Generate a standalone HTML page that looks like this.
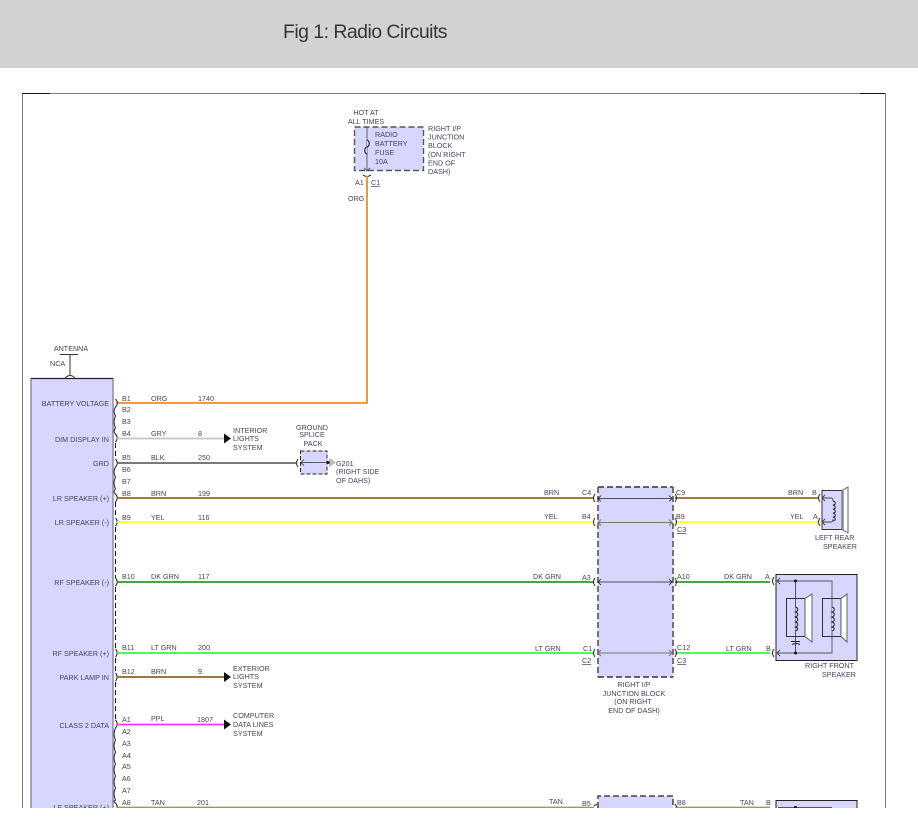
<!DOCTYPE html>
<html><head><meta charset="utf-8"><style>
html,body{margin:0;padding:0;background:#fff;width:918px;height:822px;overflow:hidden}
#h{position:absolute;left:0;top:0;width:918px;height:68px;background:#d2d2d2}
#t{position:absolute;left:283px;top:20px;font:19.5px/24px "Liberation Sans",sans-serif;color:#363636;letter-spacing:-.55px;white-space:nowrap}
svg{position:absolute;left:0;top:0}
text{font-family:"Liberation Sans",sans-serif;font-size:7.2px;fill:#45455c}
.e{text-anchor:end}.m{text-anchor:middle}
.u{text-decoration:underline}
.d{fill:none;stroke:#333;stroke-width:1.4;stroke-dasharray:6 3}
.b{fill:#d6d6ff}
.a{fill:none;stroke:#444;stroke-width:.9}
.c{fill:none;stroke:#222;stroke-width:1}
.w{stroke-width:1.8;fill:none}
</style></head><body>
<div id="h"></div><div id="t">Fig 1: Radio Circuits</div>
<svg width="918" height="822" viewBox="0 0 918 822">
<defs><clipPath id="k"><rect x="0" y="68" width="918" height="740"/></clipPath></defs>
<g clip-path="url(#k)">
<path d="M22.5 808V93.5H885.5V808" fill="none" stroke="#808080"/>
<path d="M22 93.5H50M860 93.5H885" stroke="#111" fill="none"/>

<!-- fuse -->
<rect class="b" x="354.500" y="127" width="69" height="43.500"/>
<rect class="d" x="354.500" y="127" width="69" height="43.500" style="stroke:#555"/>
<path d="M367 127V171M364 168l3 3 3-3" fill="none" stroke="#555" stroke-width=".9"/>
<path d="M367 140c3 1 3 6 0 7c-3 1-3 6 0 7" fill="#d6d6ff" stroke="#222" stroke-width="1.100"/>
<path d="M363 175q4 3 8 0" class="c"/>
<path d="M367 176V403H117" class="w" stroke="#f08a2c"/>
<text class="m" x="366" y="115">HOT AT</text><text class="m" x="366" y="124">ALL TIMES</text>
<text x="375" y="137">RADIO</text><text x="375" y="146">BATTERY</text><text x="375" y="155">FUSE</text><text x="375" y="164">10A</text>
<text x="428" y="131">RIGHT I/P</text><text x="428" y="139.500">JUNCTION</text><text x="428" y="148">BLOCK</text><text x="428" y="157">(ON RIGHT</text><text x="428" y="165.500">END OF</text><text x="428" y="174">DASH)</text>
<text x="355" y="185">A1</text><text class="u" x="371" y="185">C1</text><text x="348" y="201">ORG</text>

<!-- antenna -->
<text class="m" x="71" y="351">ANTENNA</text><text x="50" y="366">NCA</text>
<path d="M60 354.500H78M70 354V375M65 378q5-5 10 0" fill="none" stroke="#333" stroke-width="1"/>

<!-- module -->
<rect class="b" x="31" y="378.500" width="82" height="440"/>
<path d="M31 818V378.500H113V818" fill="none" stroke="#8c8ca8" stroke-width="1.500"/>
<path d="M31 378.500H113" stroke="#222" stroke-width="1"/>
<path d="M115.500 443V459M115.500 502V518M115.500 527V578M115.500 587V649M115.500 658V673M115.500 682V720" fill="none" stroke="#111" stroke-dasharray="5 3" stroke-width="1"/>
<g>
<text class="e" x="109" y="406">BATTERY VOLTAGE</text><text class="e" x="109" y="442">DIM DISPLAY IN</text><text class="e" x="109" y="466">GRD</text><text class="e" x="109" y="501">LR SPEAKER (+)</text><text class="e" x="109" y="525">LR SPEAKER (-)</text><text class="e" x="109" y="585">RF SPEAKER (-)</text><text class="e" x="109" y="656">RF SPEAKER (+)</text><text class="e" x="109" y="680">PARK LAMP IN</text><text class="e" x="109" y="728">CLASS 2 DATA</text><text class="e" x="109" y="810">LF SPEAKER (+)</text>
</g>
<!-- squiggles -->
<path class="c" d="M115.500 399q3.500 4 0 8q-3 4.500 0 9q-3 6 0 12q-3 3 0 6q3.500 4 0 8M115.500 459q3.500 4 0 8q-3 5 0 10q-3 6 0 12q-3 2.500 0 5q3.500 4 0 8M115.500 518q3.500 4 0 8M115.500 578q3.500 4 0 8M115.500 649q3.500 4 0 8M115.500 673q3.500 4 0 8M115.500 720q3.500 4 0 8q-3 6 0 12q-3 6 0 12q-3 6 0 12q-3 6 0 12q-3 6 0 12q-3 6 0 12q-3 1.500 0 3q3.500 4 0 8"/>

<!-- pin labels -->
<g>
<text x="122" y="401">B1</text><text x="122" y="412">B2</text><text x="122" y="424">B3</text><text x="122" y="436">B4</text><text x="122" y="460">B5</text><text x="122" y="472">B6</text><text x="122" y="484">B7</text><text x="122" y="496">B8</text><text x="122" y="520">B9</text><text x="122" y="579">B10</text><text x="122" y="650">B11</text><text x="122" y="674">B12</text><text x="122" y="722">A1</text><text x="122" y="734">A2</text><text x="122" y="746">A3</text><text x="122" y="758">A4</text><text x="122" y="769">A5</text><text x="122" y="781">A6</text><text x="122" y="793">A7</text><text x="122" y="805">A8</text>
<text x="151" y="401">ORG</text><text x="151" y="436">GRY</text><text x="151" y="460">BLK</text><text x="151" y="496">BRN</text><text x="151" y="520">YEL</text><text x="151" y="579">DK GRN</text><text x="151" y="650">LT GRN</text><text x="151" y="674">BRN</text><text x="151" y="721">PPL</text><text x="151" y="805">TAN</text>
<text x="198" y="401">1740</text><text x="198" y="436">8</text><text x="198" y="460">250</text><text x="198" y="496">199</text><text x="198" y="520">116</text><text x="198" y="579">117</text><text x="198" y="650">200</text><text x="198" y="674">9</text><text x="197" y="722">1807</text><text x="197" y="805">201</text>
</g>

<!-- wires -->
<path class="w" d="M117 438.500H225" stroke="#c4c4c4"/>
<path class="w" d="M117 463H296" stroke="#666"/>
<path class="w" d="M117 498H594M675 498H818" stroke="#9c6a10"/>
<path class="w" d="M117 522H594M675 522H818" stroke="#ffff20"/>
<path class="w" d="M117 582H594M675 582H770" stroke="#2a9a2a"/>
<path class="w" d="M117 653H594M675 653H770" stroke="#33ff33"/>
<path class="w" d="M117 677H225" stroke="#8a6a1c"/>
<path class="w" d="M117 724.500H225" stroke="#ff33ff"/>
<path class="w" d="M117 807.500H594M675 807.500H770" stroke="#b0904c"/>
<path d="M224 433.500l7 5-7 5zM224 672l7 5-7 5zM224 719.500l7 5-7 5z" fill="#111"/>

<text x="233" y="433">INTERIOR</text><text x="233" y="441">LIGHTS</text><text x="233" y="450">SYSTEM</text>
<text x="233" y="671">EXTERIOR</text><text x="233" y="679">LIGHTS</text><text x="233" y="688">SYSTEM</text>
<text x="233" y="718">COMPUTER</text><text x="233" y="727">DATA LINES</text><text x="233" y="736">SYSTEM</text>

<!-- ground splice -->
<text class="m" x="312" y="430">GROUND</text><text class="m" x="312" y="437">SPLICE</text><text class="m" x="313" y="446">PACK</text>
<rect class="b" x="300.500" y="451" width="26.500" height="23"/>
<rect x="300.500" y="451" width="26.500" height="23" fill="none" stroke="#222" stroke-width="1" stroke-dasharray="4 2"/>
<path d="M298 459q-3 4 0 8" class="c"/>
<path d="M304 459.500l-3 3 3 3M301 462.500H328" fill="none" stroke="#333" stroke-width=".8"/>
<circle cx="328" cy="462.500" r="1.500" fill="#111"/>
<path d="M330 458.500v8M332 459.500v6M334 461v3" stroke="#555" fill="none" stroke-width=".8"/>
<text x="336" y="466">G201</text><text x="336" y="474">(RIGHT SIDE</text><text x="336" y="483">OF DAHS)</text>

<!-- junction block -->
<rect class="b" x="598" y="487" width="75" height="190"/>
<path d="M598 487H673M598 677H673" fill="none" stroke="#333" stroke-width="1.400" stroke-dasharray="6 3"/>
<path d="M598 487V677M673 487V677" fill="none" stroke="#555" stroke-width="1.600" stroke-dasharray="6 3"/>
<path d="M598 498.500H672M601 495.500l-3 3 3 3M669 495.500l3 3-3 3M598 582H672M601 579l-3 3 3 3M669 579l3 3-3 3" fill="none" stroke="#222" stroke-width=".8"/>
<path d="M598 522.500H672M601 519.500l-3 3 3 3M669 519.500l3 3-3 3M598 653H672M601 650l-3 3 3 3M669 650l3 3-3 3" fill="none" stroke="#777" stroke-width="1"/>
<path d="M595 494q-3 4 0 8M595 518q-3 4 0 8M595 578q-3 4 0 8M595 649q-3 4 0 8M675 494q3 4 0 8M675 518q3 4 0 8M675 578q3 4 0 8M675 649q3 4 0 8" class="c"/>
<text x="544" y="495">BRN</text><text x="544" y="519">YEL</text><text x="533" y="579">DK GRN</text><text x="535" y="651">LT GRN</text><text x="549" y="804">TAN</text>
<text x="582" y="495">C4</text><text x="582" y="519">B4</text><text x="582" y="580">A3</text><text x="583" y="651">C1</text><text class="u" x="582" y="663">C2</text><text x="582" y="806">B5</text>
<text x="676" y="495">C9</text><text x="676" y="519">B9</text><text class="u" x="677" y="532">C3</text><text x="677" y="579">A10</text><text x="677" y="650">C12</text><text class="u" x="677" y="663">C3</text><text x="677" y="805">B8</text>
<text class="m" x="634" y="687">RIGHT I/P</text><text class="m" x="634" y="696">JUNCTION BLOCK</text><text class="m" x="633" y="704">(ON RIGHT</text><text class="m" x="634" y="713">END OF DASH)</text>
<rect class="b" x="598" y="796" width="75" height="20"/>
<path d="M598 808V796H673V808" fill="none" stroke="#444" stroke-width="1.500" stroke-dasharray="6 3"/>
<path d="M594 806l3-2M675 804l2 3" class="c"/>

<text x="724" y="579">DK GRN</text><text x="726" y="651">LT GRN</text><text x="740" y="805">TAN</text>
<text x="788" y="495">BRN</text><text x="790" y="519">YEL</text>

<!-- left rear speaker -->
<rect class="b" x="822" y="490.500" width="20" height="39"/>
<rect x="822" y="490.500" width="20" height="39" fill="none" stroke="#222" stroke-width=".9"/>
<path d="M842 490.500L848 487V533L842 529.500Z" fill="#fff" stroke="#666" stroke-width="1"/>
<path d="M843 490V530" stroke="#888" stroke-width="1.500"/>
<path d="M822 498H831c2 0 2 3 2 3M822 522H831c2 0 2-3 2-3" class="a"/>
<path d="M833 501c3 1 3 4 0 4c3 1 3 4 0 4c3 1 3 4 0 4c3 1 3 4 0 4c3 1 3 3 0 4" fill="none" stroke="#222"/>
<path d="M825 495l-3 3 3 3M825 519l-3 3 3 3" class="a"/>
<path d="M820 494q-3 4 0 8M820 518q-3 4 0 8" class="c"/>
<text x="812" y="495">B</text><text x="813" y="519">A</text>
<text x="815" y="540">LEFT REAR</text><text x="823" y="549">SPEAKER</text>

<!-- right front speaker -->
<rect class="b" x="776" y="574.500" width="81" height="86"/>
<rect x="776" y="574.500" width="81" height="86" fill="none" stroke="#222" stroke-width="1"/>
<path d="M778 581H832V653H778" fill="none" stroke="#555" stroke-width=".9"/>
<path d="M795.500 581V653" fill="none" stroke="#333" stroke-width=".8"/>
<rect x="786.500" y="598.500" width="18.500" height="38" fill="none" stroke="#222" stroke-width=".9"/>
<path d="M805 598.500L812 594V642L805 636.500Z" fill="#fff" stroke="#555" stroke-width=".9"/>
<rect x="822.500" y="598.500" width="18.500" height="38" fill="none" stroke="#222" stroke-width=".9"/>
<path d="M841 598.500L847 594V642L841 636.500Z" fill="#fff" stroke="#555" stroke-width=".9"/>
<path d="M795.500 607c3 1 3 4 0 5c3 1 3 4 0 5c3 1 3 4 0 5c3 1 3 4 0 5c3 1 3 3 0 4" fill="#d6d6ff" stroke="#222"/>
<path d="M832 607c3 1 3 4 0 5c3 1 3 4 0 5c3 1 3 4 0 5c3 1 3 4 0 5c3 1 3 3 0 4" fill="#d6d6ff" stroke="#222"/>
<path d="M791 641.500H800M792 644.500q4-2 8 0" fill="none" stroke="#222"/>
<circle cx="795.500" cy="581" r="1.500" fill="#111"/><circle cx="795.500" cy="653" r="1.500" fill="#111"/>
<path d="M780 578l-3 3 3 3M780 650l-3 3 3 3" class="a"/>
<path d="M774 577q-3 4 0 8M774 649q-3 4 0 8" class="c"/>
<text x="765" y="579">A</text><text x="766" y="651">B</text>
<text x="805" y="668">RIGHT FRONT</text><text x="822" y="677">SPEAKER</text>

<rect class="b" x="776" y="800.500" width="81" height="20"/>
<rect x="776" y="800.500" width="81" height="20" fill="none" stroke="#222"/>
<path d="M778 807.500H832" stroke="#555"/><circle cx="795.500" cy="807.500" r="1.500" fill="#111"/>
<text x="766" y="805">B</text>
</g>
</svg>
</body></html>
